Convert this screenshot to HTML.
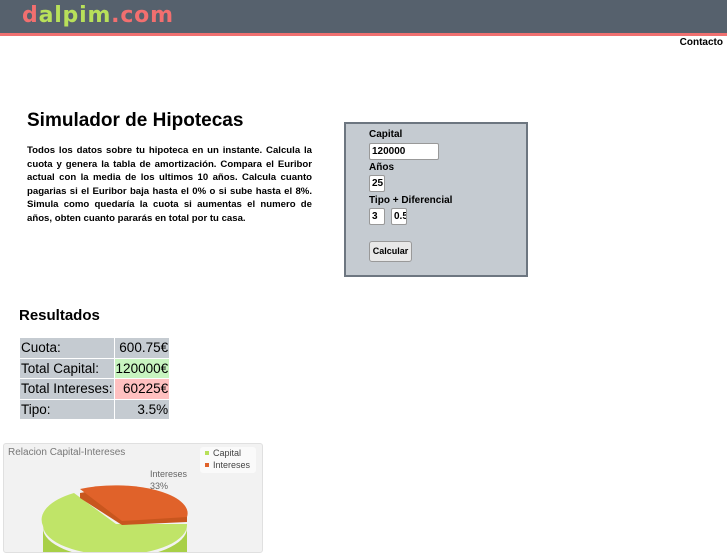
<!DOCTYPE html>
<html><head><meta charset="utf-8"><style>
*{margin:0;padding:0;box-sizing:border-box}
body{width:727px;height:545px;overflow:hidden;background:#fff;font-family:"Liberation Sans",sans-serif;position:relative}
.hdr{position:absolute;left:0;top:0;width:727px;height:36px;background:#56616d;border-bottom:3px solid #f07070}
.logo{position:absolute;left:22px;top:3px;font-family:"DejaVu Sans",sans-serif;font-size:22px;font-weight:bold;color:#f26f6f;letter-spacing:0.8px}
.logo b{color:#b8e05a}
.contacto{position:absolute;right:4px;top:37px;font-size:10px;font-weight:bold;color:#000}
h1{position:absolute;left:27px;top:110px;font-size:19px;font-weight:bold}
.intro{position:absolute;left:27px;top:144px;width:285px;font-size:9.6px;font-weight:bold;line-height:13.6px}
.intro span{display:block;text-align:justify;text-align-last:justify;white-space:nowrap}
.intro span.l{text-align-last:left}
.form{position:absolute;left:344px;top:122px;width:184px;height:155px;background:#c5cbd1;border:2px solid #6d7680}
.form label{position:absolute;left:23px;font-size:10px;font-weight:bold}
.inp{position:absolute;background:#fff;border:1px solid #999;border-radius:2px;font-size:10px;font-weight:bold;padding:2px 2px;height:17px;overflow:hidden}
.btn{position:absolute;left:23px;top:117px;width:43px;height:21px;background:#e8e8e8;border:1px solid #999;border-radius:3px;font-size:9px;font-weight:bold;text-align:center;line-height:19px}
h2{position:absolute;left:19px;top:307px;font-size:15px;font-weight:bold}
table{position:absolute;left:19px;top:337px;border-collapse:separate;border-spacing:1px;font-size:13.5px;white-space:nowrap}
td{background:#c5cbd1;height:19.5px;padding:0 1px}
td.r{text-align:right}
.g{background:#c8f4c0!important}.p{background:#ffc0c0!important}
.chart{position:absolute;left:3px;top:443px;width:260px;height:110px;background:#f2f2f2;border:1px solid #e0e0e0;border-radius:3px;overflow:hidden}
</style></head><body>
<div class="hdr"><div class="logo">d<b>alpim</b>.com</div></div>
<div class="contacto">Contacto</div>
<h1>Simulador de Hipotecas</h1>
<div class="intro"><span>Todos los datos sobre tu hipoteca en un instante. Calcula la</span><span>cuota y genera la tabla de amortización. Compara el Euribor</span><span>actual con la media de los ultimos 10 años. Calcula cuanto</span><span>pagarias si el Euribor baja hasta el 0% o si sube hasta el 8%.</span><span>Simula como quedaría la cuota si aumentas el numero de</span><span class="l">años, obten cuanto pararás en total por tu casa.</span></div>
<div class="form">
<label style="top:5px">Capital</label>
<div class="inp" style="left:23px;top:19px;width:70px">120000</div>
<label style="top:38px">Años</label>
<div class="inp" style="left:23px;top:51px;width:16px">25</div>
<label style="top:71px">Tipo + Diferencial</label>
<div class="inp" style="left:23px;top:84px;width:16px">3</div>
<div class="inp" style="left:45px;top:84px;width:16px">0.5</div>
<div class="btn">Calcular</div>
</div>
<h2>Resultados</h2>
<table>
<tr><td style="width:93px">Cuota:</td><td class="r" style="width:52px">600.75€</td></tr>
<tr><td>Total Capital:</td><td class="r g">120000€</td></tr>
<tr><td>Total Intereses:</td><td class="r p">60225€</td></tr>
<tr><td>Tipo:</td><td class="r">3.5%</td></tr>
</table>
<div class="chart">
<svg width="260" height="110" style="position:absolute;left:0;top:0">
<text x="4" y="11" font-size="10" fill="#777" font-family="Liberation Sans">Relacion Capital-Intereses</text>
<rect x="196" y="3" width="56" height="26" rx="3" fill="#fafafa"/>
<rect x="201" y="7" width="4" height="4" fill="#b8e05a"/><text x="209" y="12" font-size="9" fill="#444" font-family="Liberation Sans">Capital</text>
<rect x="201" y="19" width="4" height="4" fill="#e0622a"/><text x="209" y="24" font-size="9" fill="#444" font-family="Liberation Sans">Intereses</text>
<text x="146" y="33" font-size="9" fill="#666" font-family="Liberation Sans">Intereses</text>
<text x="146" y="45" font-size="9" fill="#666" font-family="Liberation Sans">33%</text>
<path d="M39 84 A72 30 0 0 0 183 84 L183 110 L39 110 Z" fill="#a8d048"/>
<path d="M70 49 L112 80 L183 80 A72 30 0 0 1 39 82 A72 32 0 0 1 70 49 Z" fill="#c0e468"/>
<path d="M76 49 A72 28 0 0 1 183 73 L183 78 L118 81 L76 54 Z" fill="#c8561e"/>
<path d="M76 45 A72 28 0 0 1 183 73 L118 77 Z" fill="#e0622a"/>
</svg>
</div>
</body></html>
